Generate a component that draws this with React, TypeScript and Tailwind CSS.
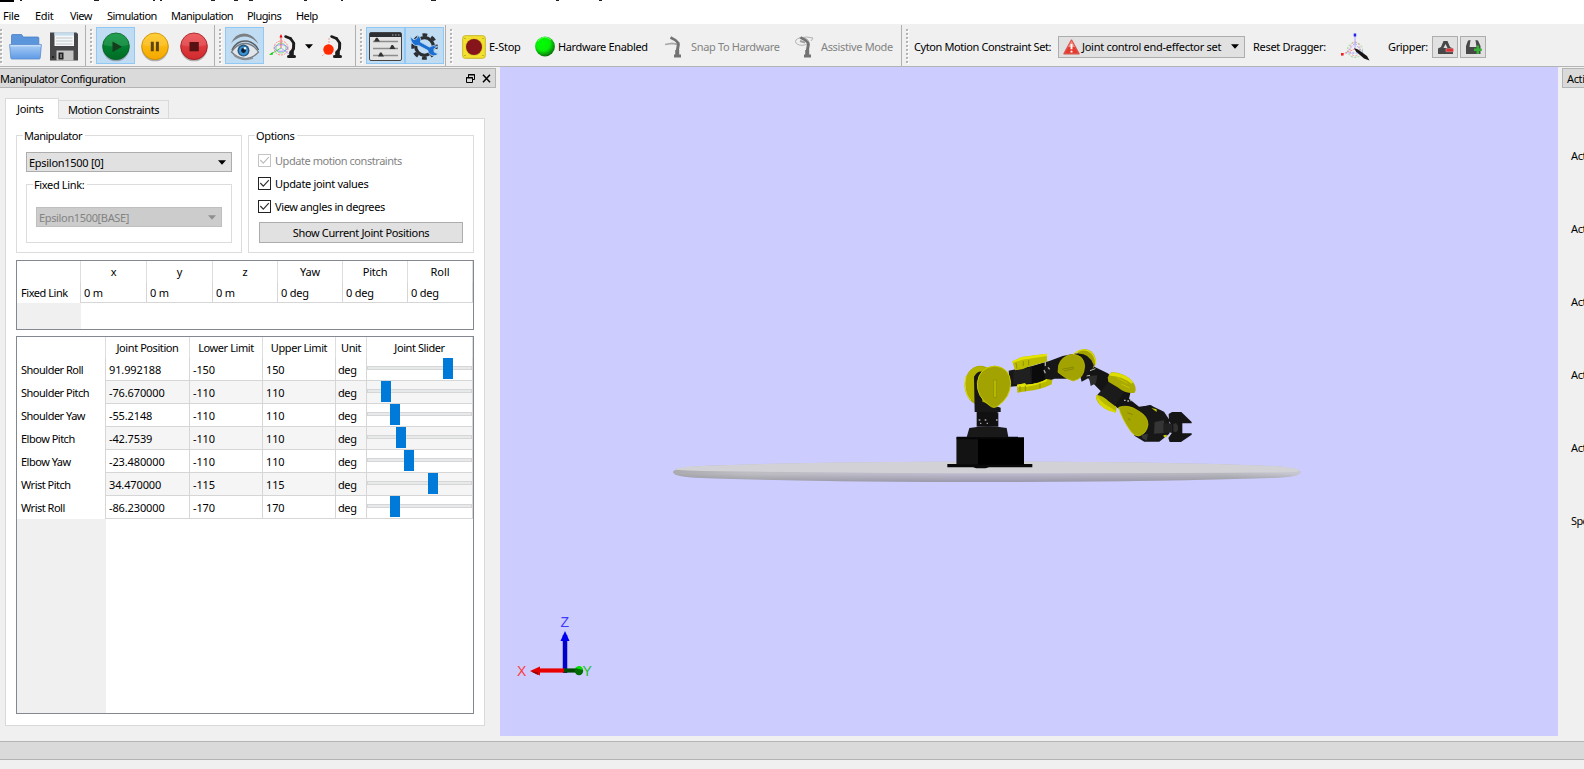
import type { ReactNode } from "react";

type Joint = { name: string; pos: string; lo: string; hi: string; knob: number };

const joints: Joint[] = [
  { name: "Shoulder Roll", pos: "91.992188", lo: "-150", hi: "150", knob: 76 },
  { name: "Shoulder Pitch", pos: "-76.670000", lo: "-110", hi: "110", knob: 14 },
  { name: "Shoulder Yaw", pos: "-55.2148", lo: "-110", hi: "110", knob: 23 },
  { name: "Elbow Pitch", pos: "-42.7539", lo: "-110", hi: "110", knob: 29 },
  { name: "Elbow Yaw", pos: "-23.480000", lo: "-110", hi: "110", knob: 37 },
  { name: "Wrist Pitch", pos: "34.470000", lo: "-115", hi: "115", knob: 61 },
  { name: "Wrist Roll", pos: "-86.230000", lo: "-170", hi: "170", knob: 23 },
];

/* Visible slivers of the clipped window caption: [left, width] */
const captionMarks: [number, number][] = [
  [20, 2], [94, 5], [153, 2], [160, 2], [211, 4], [234, 4], [249, 4], [304, 3], [341, 2], [431, 5], [556, 3], [599, 3],
];

function Grip() {
  return (
    <svg className="h-[36px] w-[3px] shrink-0" viewBox="0 0 3 36" shapeRendering="crispEdges">
      {[0, 4, 8, 12, 16, 20, 24, 28, 32].map((y) => (
        <g key={y}>
          <rect x="1" y={y + 1} width="2" height="2" fill="#fff" />
          <rect x="0" y={y} width="2" height="2" fill="#b4b4b4" />
        </g>
      ))}
    </svg>
  );
}

function Section({ className, children }: { className: string; children?: ReactNode }) {
  return <div className={`flex h-full shrink-0 items-center border-r border-[#b0b0b0] pt-[2px] ${className}`}>{children}</div>;
}

function ToolButton({ active, children }: { active?: boolean; children: ReactNode }) {
  return (
    <div
      className={`mb-[2px] flex h-[37px] w-[39px] shrink-0 items-center justify-center border pt-[2px] ${
        active ? "border-[#90c8f6] bg-[#c0dcf3]" : "border-transparent"
      }`}
    >
      {children}
    </div>
  );
}

function Folder() {
  return (
    <svg className="h-[27px] w-[33px] shrink-0" viewBox="0 0 33 27">
      <defs>
        <linearGradient id="fo" x1="0" y1="0" x2="0" y2="1">
          <stop offset="0" stopColor="#a9cdf5" />
          <stop offset="1" stopColor="#5f9be6" />
        </linearGradient>
      </defs>
      <path d="M2.500 12V2.500q0-1 1-1h8.500q1 0 1.400 1l.4 1.500h15q1 0 1 1V12z" fill="#5b95dc" stroke="#4a7fc4" strokeWidth=".8" />
      <path d="M.6 11.600h31.800l-1.200 13.400q-.1 1-1 1H2.800q-.9 0-1-1z" fill="url(#fo)" stroke="#5a8ccc" strokeWidth=".8" />
      <path d="M1.200 12.800h30.600" stroke="#d6e8fc" />
    </svg>
  );
}

function Floppy() {
  return (
    <svg className="h-[29px] w-[28px] shrink-0" viewBox="0 0 28 29">
      <path d="M0 .5h26.500L28 2v26.500H0z" fill="#47474a" />
      <path d="M4.500.5h19.500v13.500H4.500z" fill="#f4f6f8" />
      <path d="M4.500.5h19.500v3H4.500z" fill="#c5dcee" />
      <path d="M6 6h16.500M6 9h16.500M6 12h16.500" stroke="#c3c8cc" />
      <path d="M6.500 18.500h17v10h-17z" fill="#c4c4c4" />
      <path d="M8.500 20.500h5v7h-5z" fill="#222" />
      <path d="M10 22h2v4h-2z" fill="#777" />
      <path d="M2 24h2v2H2z" fill="#222" />
    </svg>
  );
}

function Round({ kind }: { kind: "play" | "pause" | "stop" }) {
  const c = { play: ["#00953a", "#0a6424", "#006b25"], pause: ["#ffc81e", "#c98f00", "#f5a800"], stop: ["#ee4b4f", "#a31c1f", "#cf2a2e"] }[kind];
  return (
    <svg className="h-[31px] w-[30px]" viewBox="0 0 30 31">
      <defs>
        <linearGradient id={kind} x1="0" y1="0" x2="0" y2="1">
          <stop offset="0" stopColor={c[0]} />
          <stop offset="1" stopColor={c[2]} />
        </linearGradient>
      </defs>
      <ellipse cx="15" cy="17" rx="13.500" ry="13.300" fill="#333" opacity=".35" />
      <circle cx="15" cy="15.300" r="13.300" fill={`url(#${kind})`} stroke={c[1]} strokeWidth=".9" />
      <path d="M2.500 14a12.500 11.800 0 0 1 25 0q-12 3-25 0z" fill="#fff" opacity=".12" />
      {kind === "play" && <path d="M11.500 10.500l9.500 5.200-9.500 5.300z" fill="#133d1d" />}
      {kind === "pause" && <path d="M10.800 10.800h3v9.500h-3zM15.900 10.800h3v9.500h-3z" fill="#5c4510" />}
      {kind === "stop" && <path d="M10.500 11h9.300v9.300h-9.300z" fill="#571113" />}
    </svg>
  );
}

function EyeIcon() {
  return (
    <svg className="h-[29px] w-[30px]" viewBox="0 0 30 29">
      <path d="M1 11.500Q5 1.500 14 1.500q9 0 14.500 10.500Q22 4.300 14 4.500 7 4.800 1 11.500z" fill="#7c7f83" />
      <path d="M2 18Q6.500 9 15 9q9 0 13.500 9" fill="none" stroke="#5b6066" strokeWidth="1.500" />
      <path d="M1.500 20Q7 11.500 15 11.500T28.500 20Q22 27 14.500 26.500 7 26 1.500 20z" fill="#e2e6ea" stroke="#777c82" strokeWidth="1.300" />
      <path d="M4 23q8 6.500 19 3" fill="none" stroke="#8b8f94" strokeWidth="1.800" />
      <circle cx="13.500" cy="18.500" r="6" fill="#25567f" />
      <circle cx="13.500" cy="18.800" r="4.600" fill="#3d90d2" />
      <circle cx="13.500" cy="18.500" r="2.400" fill="#0a1c2e" />
      <circle cx="15" cy="16.200" r="1.200" fill="#fff" />
    </svg>
  );
}

function MiniArm() {
  return (
    <g fill="none" stroke="#1d1d1d" strokeLinecap="round">
      <path d="M16.500 2.500l5 2" strokeWidth="2.600" />
      <path d="M21.500 4.500l3.200 4.500" strokeWidth="2.800" />
      <path d="M24.700 9.500l-.2 5-2 4" strokeWidth="3" />
      <path d="M22.500 18.500v3" strokeWidth="4.600" />
      <path d="M19.500 22.500h6" strokeWidth="3" />
    </g>
  );
}

function DraggerArm() {
  return (
    <svg className="h-[26px] w-[29px] shrink-0" viewBox="0 0 29 26">
      <g fill="none" strokeWidth=".8">
        <circle cx="12" cy="14" r="7" stroke="#ff7272" strokeDasharray="2 1" />
        <circle cx="12" cy="14" r="5" stroke="#6ed66e" />
        <ellipse cx="12" cy="14" rx="6.500" ry="3.300" stroke="#8585ff" />
        <path d="M12 14V2" stroke="#e44" />
        <path d="M12 14L2 20" stroke="#3c3" />
        <path d="M12 14l8 6" stroke="#99f" />
      </g>
      <path d="M10.500 3.500L12 0l1.500 3.500z" fill="#e00" />
      <path d="M0 21l3.500-3 .5 2.500z" fill="#0c0" />
      <MiniArm />
    </svg>
  );
}

function BallArm() {
  return (
    <svg className="h-[26px] w-[29px] shrink-0" viewBox="0 0 29 26">
      <path d="M6 22l6-5M12 17l6 5M13 4v8" stroke="#e88" strokeWidth=".8" strokeDasharray="2 1" />
      <g transform="translate(-1 0)"><MiniArm /></g>
      <circle cx="12.500" cy="15.500" r="5.200" fill="#ff2a00" />
    </svg>
  );
}

function PanelIcon() {
  return (
    <svg className="h-[29px] w-[33px]" viewBox="0 0 33 29">
      <rect x=".5" y=".5" width="32" height="28" rx="1.500" fill="#e4e4e4" stroke="#444" />
      <path d="M1 1h31v4H1z" fill="#2c2f33" />
      <path d="M23 3h1.500M26 3h1.500M29 3h1.500" stroke="#aaa" />
      <path d="M4 9.500h25M4 16.500h25M4 23.500h25" stroke="#8d8d8d" strokeWidth="1.500" />
      <path d="M5 9.500L7 5.800h1.500l2.500 3.700zM20.500 17l2-4h1.500l2.500 4zM9 24.500l2-4h1.500l2.500 4z" fill="#333" />
    </svg>
  );
}

function GearWrench() {
  return (
    <svg className="h-[29px] w-[33px]" viewBox="0 0 33 29">
      <circle cx="16.500" cy="14.500" r="8.800" fill="none" stroke="#2b2e32" strokeWidth="3.200" />
      <circle cx="16.500" cy="14.500" r="11.600" fill="none" stroke="#2b2e32" strokeWidth="3.200" strokeDasharray="4.800 4.311" strokeDashoffset="2.400" />
      <path
        d="M2 4.500l4 3.200 3.200-1.400.2-3q4.600 2.500 3 6.700l9.100 5q3.800-2.800 8-.4l-3.600 2.300.3 3.200 4.200 2q-5.600 3.800-9.600-.8-.9-1-.8-2.700l-9.600-5.200Q3.800 15.300 2 4.500z"
        fill="#1c6fd0"
        stroke="#c0dcf3"
        strokeWidth=".8"
      />
    </svg>
  );
}

function EStopIcon() {
  return (
    <svg className="h-6 w-6 shrink-0" viewBox="0 0 24 24">
      <rect x=".7" y=".7" width="22.600" height="22.600" rx="2.500" fill="#f3e02f" stroke="#c9b82a" />
      <circle cx="12" cy="12" r="8.700" fill="#d8c62b" />
      <circle cx="12" cy="12" r="8" fill="#85151a" />
      <path d="M2.500 3.500h1M20.500 3.500h1M2.500 20.500h1M20.500 20.500h1" stroke="#8f8428" />
    </svg>
  );
}

function Led() {
  return (
    <svg className="h-[21px] w-5 shrink-0" viewBox="0 0 20 21">
      <defs>
        <radialGradient id="led" cx=".4" cy=".36" r=".64">
          <stop offset="0" stopColor="#0f0" />
          <stop offset=".55" stopColor="#08ee08" />
          <stop offset="1" stopColor="#0a740a" />
        </radialGradient>
      </defs>
      <circle cx="10" cy="10.500" r="9.900" fill="url(#led)" />
      <path d="M3 5q6-7 13-1" stroke="#8dff8d" fill="none" opacity=".7" />
    </svg>
  );
}

function GreyArm({ assist }: { assist?: boolean }) {
  return (
    <svg className="h-[22px] w-[19px] shrink-0" viewBox="0 0 19 22">
      {assist ? (
        <g fill="none" stroke="#b2b2b2">
          <ellipse cx="7" cy="5.500" rx="6.500" ry="3.800" />
          <path d="M4 2q8-2 14 0l-2 3" />
          <path d="M5 5l5 1.500" strokeWidth="2" stroke="#a2a2a2" />
        </g>
      ) : (
        <path d="M0 8.500l7-1.200 6 1" fill="none" stroke="#a8a8a8" strokeWidth="1.700" />
      )}
      <g fill="none" stroke="#737373">
        <path d="M5.500 1.500l5 2.700 3.500 3.800" strokeWidth="2.600" />
        <path d="M13.500 7.500L12.300 15" strokeWidth="3" />
        <path d="M12.200 14v5" strokeWidth="4" />
        <path d="M9 20h7" strokeWidth="3" />
      </g>
    </svg>
  );
}

function Warning() {
  return (
    <svg className="h-[16px] w-[17px] shrink-0" viewBox="0 0 17 16">
      <path d="M8.500 1.200L16 14.800H1z" fill="#e63a2e" stroke="#d8544b" strokeWidth="1.500" strokeLinejoin="round" />
      <path d="M8.500 1.800L12 8 5 8z" fill="#f58b80" />
      <path d="M8.500 5v5.200M8.500 11.800v1.800" stroke="#fff" strokeWidth="1.900" />
    </svg>
  );
}

function ResetDragger() {
  return (
    <svg className="h-[28px] w-[30px] shrink-0" viewBox="0 0 30 28">
      <g fill="none" strokeWidth="1" strokeDasharray="2 1.500">
        <circle cx="14" cy="17" r="7.500" stroke="#8edb8e" />
        <ellipse cx="14" cy="16" rx="5" ry="7" stroke="#f59a9a" />
        <path d="M5 20l9-10 8 10z" stroke="#9b9bff" />
      </g>
      <path d="M14 15V3" stroke="#aaf" />
      <path d="M14 16L2 21" stroke="#f88" strokeDasharray="2 1" />
      <rect x="12.700" y=".5" width="2.500" height="3" fill="#22e" />
      <rect x="0" y="20" width="2.600" height="2.600" fill="#e22" />
      <path d="M13 15l4 1.500L26 23l2.500 4.500L23 25.500l-8-7z" fill="#151515" />
    </svg>
  );
}

function GripperIcon({ open }: { open?: boolean }) {
  return (
    <svg className="h-4 w-[17px]" viewBox="0 0 17 16">
      {open ? (
        <path d="M1 15V7l2-5.500L5.500 1l-1 7h7l-1-7L13 1.500 15.500 7v8z" fill="#484848" />
      ) : (
        <path d="M1 15V9.500L4 8l2.500-6h4L13 8l3 1.500V15zM8.500 5L6.500 9h4z" fill="#484848" fillRule="evenodd" />
      )}
      {open ? (
        <path d="M11.500 6.500h2.600v3h2.700V12h-2.700v3h-2.600v-3H9V9.500h2.500z" fill="#36b336" />
      ) : (
        <path d="M9 9.700h7.500v3H9z" fill="#e02b30" stroke="#f4b0b0" strokeWidth=".5" />
      )}
    </svg>
  );
}

function Caret({ dim }: { dim?: boolean }) {
  return (
    <svg className="h-[5px] w-2 shrink-0" viewBox="0 0 8 5">
      <path d="M0 .3h8L4 4.700z" fill={dim ? "#8f8f8f" : "#000"} />
    </svg>
  );
}

function Check({ label, dim, spacing }: { label: string; dim?: boolean; spacing: string }) {
  return (
    <div className={`flex h-[23px] items-center ${dim ? "text-[#838383]" : ""} ${spacing}`}>
      <svg className="mr-1 h-[13px] w-[13px]" viewBox="0 0 13 13">
        <rect x=".5" y=".5" width="12" height="12" fill="#fff" stroke={dim ? "#c4c4c4" : "#222"} />
        <path d="M2.300 6l3 3.200 5.500-6" fill="none" stroke={dim ? "#bdbdbd" : "#333"} strokeWidth="1.200" />
      </svg>
      {label}
    </div>
  );
}

function Legend({ children }: { children: ReactNode }) {
  return <span className="absolute -top-[8px] left-[6px] bg-white pl-px pr-[3px] leading-4">{children}</span>;
}

function Robot() {
  return (
    <svg className="absolute left-[430px] top-[273px] h-[140px] w-[280px]" viewBox="0 0 840 420">
      <path d="M52 372h255v10h-130l-10 3h-28l-10-3H52z" fill="#090909" />
      <path d="M80 292h202v82H80z" fill="#000" />
      <path d="M80 292h64v82H80z" fill="#131313" />
      <path d="M80 290h184v8H80z" fill="#050505" />
      <path d="M110 292l8-28q56-10 112 0l5 28z" fill="#191919" />
      <path d="M140 212h65v48h-65z" fill="#111" />
      <path d="M146 240h5M164 240h5M198 240h5M150 250h4M170 250h4M203 218h4" stroke="#aaa" strokeWidth="4" />
      <ellipse cx="151" cy="136" rx="47" ry="59" fill="#a8a800" />
      <path d="M108 110q12-30 44-31l28 10q-40 0-44 40v60q-34-30-28-79z" fill="#b4b400" />
      <path d="M108 108q-10 45 14 72" fill="none" stroke="#e0e000" strokeWidth="3" />
      <path d="M132 110q10-18 25-15v90l55 18v13h-78z" fill="#171717" />
      <path d="M236 92l70-14 50-14 42-16 30-6v74l-55 0-25 10-66 10-42 4z" fill="#171717" />
      <path d="M250 92l50-8 4 45-54 4z" fill="#202020" />
      <path d="M247 64l28-13 76-10v24l-30 8-28 8-14 6-24 4z" fill="#bcbc00" />
      <path d="M247 64l28-13 76-10v7l-74 11-30 10z" fill="#e4e400" />
      <path d="M258 68l3 18M280 64v14M296 60v16" stroke="#7c7c00" strokeWidth="2" />
      <path d="M306 80l36-12 2 54-38 6z" fill="#0b0b0b" />
      <path d="M346 64v14M342 90l4 10M354 82l5 6" stroke="#a9a9a9" strokeWidth="4" />
      <path d="M261 134l24-4 4 4q40-3 61-17l17 3-2 13q-30 16-77 21l-26 4z" fill="#b9b900" />
      <path d="M261 134l24-4 4 4q40-3 61-17v7q-30 13-60 16l-28 2z" fill="#e3e300" />
      <path d="M270 138v16M286 136v18M330 130v14" stroke="#7c7c00" strokeWidth="2" />
      <path d="M194 78q46 4 48 52-2 42-36 66-14 12-28 0-38-26-36-68 6-46 52-50z" fill="#a2a200" stroke="#cbcb00" strokeWidth="3" />
      <path d="M191 120h8v52h-8z" fill="#bcbc00" stroke="#808000" strokeWidth="1.500" />
      <ellipse cx="465" cy="64" rx="32" ry="36" fill="#a3a300" />
      <path d="M432 42q20-18 42-10 22 10 23 40" fill="none" stroke="#dada00" strokeWidth="4" />
      <path d="M433 41q45-6 58 34l-10 36-26 14z" fill="#161616" />
      <path d="M468 108l25-28 40 20 70 50-6 26 30 24 36-4 20 16-30 20-50-14-42-15z" fill="#141414" />
      <path d="M476 108l26-2-4 24-16 8zM500 140l38 34" fill="#2d2d2d" />
      <path d="M540 122l45 30-36 54-48-40z" fill="#1b1b1b" />
      <path d="M480 92l16-6M470 108l10-2" stroke="#bbb" strokeWidth="3" />
      <path d="M386 76q8-28 42-33 34 2 36 36-2 38-34 44-20-4-46-26z" fill="#a2a200" stroke="#c3c300" strokeWidth="2" />
      <path d="M396 88l36-7M402 93l30-7" stroke="#7a7a00" strokeWidth="2" />
      <path d="M533 112l12-16q44 4 64 30 14 20 4 33-28 2-48-16l-30-18z" fill="#aaaa00" />
      <path d="M535 106l12-9q44 5 62 30l-4 4q-28-22-64-24z" fill="#dede00" />
      <path d="M560 112l32 18M574 132l25 12" stroke="#c4c400" strokeWidth="3" />
      <path d="M500 164q18 2 36 20l24 18-2 15q-50-10-60-42z" fill="#b9b900" />
      <path d="M500 164q8 16 24 28l35 22-2 4q-46-10-57-42z" fill="#d6d600" />
      <path d="M582 181h5M592 183h5M601 182h4" stroke="#bbb" strokeWidth="4" />
      <path d="M620 205l40-10 42 20 16 24v42l-30 24h-45l-30-18z" fill="#171717" />
      <path d="M664 204l16 4v8zM700 286l10-2v8h-8z" fill="#c9c900" />
      <path d="M566 202q30-10 58 10 30 16 30 42-4 28-28 34-14 0-24-14-28-40-36-72z" fill="#a5a500" stroke="#cccc00" strokeWidth="2" />
      <path d="M592 218l16 6M594 236l8 4" stroke="#777700" strokeWidth="2" />
      <path d="M674 246l28-5 2 38-32 2zM634 284l20-2-4 20-14-8z" fill="#353535" />
      <path d="M700 250h50v28h-50z" fill="#202020" />
      <path d="M724 250h18v28h-18z" fill="#353535" />
      <path d="M716 222l10-6h28l31 30v4h-28v30h28v4l-32 22h-34l-4-12 10-14v-26l-8-10z" fill="#151515" />
      <path d="M730 252l8-3 6 8v14l-6 6-8-3z" fill="#313131" />
    </svg>
  );
}

function Platform() {
  return (
    <svg className="absolute left-[172px] top-[393px] h-[24px] w-[632px]" viewBox="0 0 632 24">
      <defs>
        <linearGradient id="rim" x1="0" y1="0" x2="1" y2="0">
          <stop offset="0" stopColor="#aaaab0" />
          <stop offset=".12" stopColor="#bdbdc2" />
          <stop offset=".5" stopColor="#bebad0" />
          <stop offset=".88" stopColor="#b7b7be" />
          <stop offset="1" stopColor="#c8c8d2" />
        </linearGradient>
        <linearGradient id="shade" x1="0" y1="0" x2="0" y2="1">
          <stop offset=".6" stopColor="#777786" stopOpacity="0" />
          <stop offset="1" stopColor="#777786" stopOpacity=".5" />
        </linearGradient>
      </defs>
      <path d="M1 12Q1 8 30 6 150 1.500 316 1.500T602 6Q629 8 629 12q0 5-29 6-120 4-284 4T30 18Q1 17 1 12z" fill="url(#rim)" />
      <path d="M1 12Q1 8 30 6 150 1.500 316 1.500T602 6Q629 8 629 12q0 5-29 6-120 4-284 4T30 18Q1 17 1 12z" fill="url(#shade)" />
      <path d="M3 9.500Q4 7 30 6 150 1.500 316 1.500T602 6Q626 7.500 628 11q-6 2-46 1.500-120 .7-266 .7T50 11.200Q6 10.800 3 9.500z" fill="#d2d2d6" />
    </svg>
  );
}

function Axes() {
  return (
    <svg className="absolute left-[16px] top-[545px] h-[70px] w-[80px]" viewBox="0 0 80 70" fontFamily="Liberation Sans, sans-serif" fontSize="14" letterSpacing="0">
      <path d="M49 23v38" stroke="#0000c8" strokeWidth="4.500" />
      <path d="M44.500 29L49 19l4.500 10z" fill="#0000f0" />
      <path d="M49 58.500H22" stroke="#e80000" strokeWidth="4.200" />
      <path d="M24 54.500v9L14 59z" fill="#e00000" />
      <path d="M22 60v3l-7-3.500z" fill="#900" />
      <path d="M48 58.500h14" stroke="#004b00" strokeWidth="4.200" />
      <circle cx="63" cy="59" r="4.200" fill="#006b00" />
      <path d="M59 56q6-5 8 2z" fill="#00e000" />
      <text x="44.500" y="15" fill="#3a3aff">Z</text>
      <text x="1" y="64" fill="#ff3b3b">X</text>
      <text x="66.500" y="64" fill="#21c021">Y</text>
    </svg>
  );
}

function Head({ w, children }: { w: string; children?: ReactNode }) {
  return <div className={`flex shrink-0 items-center justify-center border-r border-[#dedede] ${w}`}>{children}</div>;
}

function Cell({ w, children }: { w: string; children?: ReactNode }) {
  return <div className={`flex shrink-0 items-center border-r border-b border-[#d6d6d6] ${w}`}>{children}</div>;
}

export default function App() {
  return (
    <div className="flex h-[769px] w-[1584px] flex-col overflow-hidden bg-[#f0f0f0] font-['Noto_Sans','Liberation_Sans',sans-serif] text-[11px] leading-none tracking-[-0.35px] whitespace-nowrap text-black">
      <div className="relative h-[3px] shrink-0 bg-white">
        <div className="h-[2px] w-[14px] bg-black" />
        {captionMarks.map(([left, width]) => (
          <i key={left} className="absolute top-0 h-px bg-[#222]" style={{ left, width }} />
        ))}
      </div>
      <div className="flex h-[21px] shrink-0 items-center bg-white pl-[3px] pt-[4px] tracking-[-0.55px]">
        <span className="w-8 tracking-[-0.3px]">File</span>
        <span className="w-[35px] tracking-[-0.3px]">Edit</span>
        <span className="w-[37px]">View</span>
        <span className="w-16">Simulation</span>
        <span className="w-[76px]">Manipulation</span>
        <span className="w-[49px]">Plugins</span>
        <span>Help</span>
      </div>

      <div className="flex h-[43px] shrink-0 items-center border-b border-[#b4b4b4] border-t border-t-[#f0f0f0]">
        <Section className="w-[86px]">
          <Grip />
          <span className="w-[6px]" />
          <Folder />
          <span className="w-2" />
          <Floppy />
        </Section>
        <Section className="w-[129px] pl-1">
          <Grip />
          <span className="w-[3px]" />
          <ToolButton active><Round kind="play" /></ToolButton>
          <ToolButton><Round kind="pause" /></ToolButton>
          <ToolButton><Round kind="stop" /></ToolButton>
        </Section>
        <Section className="w-[141px] pl-1">
          <Grip />
          <span className="w-[3px]" />
          <ToolButton active><EyeIcon /></ToolButton>
          <span className="w-[5px]" />
          <DraggerArm />
          <span className="w-[7px]" />
          <Caret />
          <span className="w-[3px]" />
          <BallArm />
        </Section>
        <Section className="w-[90px] pl-1">
          <Grip />
          <span className="w-[3px]" />
          <ToolButton active><PanelIcon /></ToolButton>
          <ToolButton active><GearWrench /></ToolButton>
        </Section>
        <Section className="w-[456px] pl-1">
          <Grip />
          <span className="w-[9px]" />
          <EStopIcon />
          <span className="w-[46px] shrink-0 pl-[3px] tracking-[-0.25px]">E-Stop</span>
          <span className="w-[3px]" />
          <Led />
          <span className="w-[110px] shrink-0 pl-[3px]">Hardware Enabled</span>
          <GreyArm />
          <span className="w-[111px] shrink-0 pl-[7px] text-[#838383]">Snap To Hardware</span>
          <GreyArm assist />
          <span className="pl-[7px] text-[#838383]">Assistive Mode</span>
        </Section>
        <div className="flex h-full items-center pl-1 pt-[2px]">
          <Grip />
          <span className="w-[149px] shrink-0 pl-[5px] tracking-[-0.4px]">Cyton Motion Constraint Set:</span>
          <div className="flex h-[22px] w-[187px] shrink-0 items-center border border-[#adadad] bg-[#e1e1e1] pl-1">
            <Warning />
            <span className="w-[151px] shrink-0 pl-[2px] tracking-[-0.28px]">Joint control end-effector set</span>
            <Caret />
          </div>
          <span className="w-[96px] shrink-0 pl-2 tracking-[-0.3px]">Reset Dragger:</span>
          <ResetDragger />
          <span className="w-[61px] shrink-0 pl-[17px]">Gripper:</span>
          <div className="mr-[2px] flex h-[22px] w-[26px] items-center justify-center border border-[#adadad] bg-[#e1e1e1]"><GripperIcon /></div>
          <div className="flex h-[22px] w-[26px] items-center justify-center border border-[#adadad] bg-[#e1e1e1]"><GripperIcon open /></div>
        </div>
      </div>

      <div className="flex h-[669px] shrink-0">
        <div className="flex w-[500px] shrink-0 flex-col pt-px">
          <div className="flex h-[20px] w-[496px] shrink-0 items-center justify-between border border-l-0 border-[#b4b4b4] bg-[#dadada] pr-[4px]">
            <span className="tracking-[-0.5px]">Manipulator Configuration</span>
            <svg className="h-[9px] w-[25px]" viewBox="0 0 25 9" fill="none" stroke="#000">
              <path d="M2.500 3V.5h6v5H6.500" />
              <path d="M2 1h7" />
              <path d="M.5 3.500h6v5h-6zM0 4h7" />
              <path d="M17 .8l7 7.400M24 .8l-7 7.400" strokeWidth="1.500" />
            </svg>
          </div>
          <div className="mt-[10px] flex h-[20px] shrink-0 items-end pl-[5px]">
            <div className="relative z-10 -mb-px flex h-[21px] w-[54px] items-center border border-b-0 border-[#d9d9d9] bg-white pl-[11px] pb-[2px]">Joints</div>
            <div className="flex h-[18px] w-[110px] items-center border border-b-0 border-l-0 border-[#d9d9d9] pl-[9px] tracking-[-0.43px]">Motion Constraints</div>
          </div>
          <div className="ml-[5px] flex h-[608px] w-[480px] shrink-0 flex-col border border-[#d9d9d9] bg-white pl-[10px] pt-[16px]">
            <div className="flex h-[118px] shrink-0 gap-[6px]">
              <div className="relative w-[226px] border border-[#dcdcdc] px-[9px] pt-[16px]">
                <Legend><span className="tracking-[-0.5px]">Manipulator</span></Legend>
                <div className="flex h-[20px] items-center justify-between border border-[#adadad] bg-[#e1e1e1] pl-[2px] pr-[5px] pt-px">
                  <span className="tracking-[-0.28px]">Epsilon1500 [0]</span>
                  <Caret />
                </div>
                <div className="relative mt-[12px] h-[59px] border border-[#dcdcdc] px-[9px] pt-[22px]">
                  <Legend>Fixed Link:</Legend>
                  <div className="flex h-[20px] items-center justify-between border border-[#bfbfbf] bg-[#ccc] pl-[2px] pr-[5px] pt-px text-[#838383]">
                    <span>Epsilon1500[BASE]</span>
                    <Caret dim />
                  </div>
                </div>
              </div>
              <div className="relative w-[226px] border border-[#dcdcdc] pl-[9px] pt-[13px]">
                <Legend>Options</Legend>
                <Check label="Update motion constraints" dim spacing="tracking-[-0.45px]" />
                <Check label="Update joint values" spacing="tracking-[-0.33px]" />
                <Check label="View angles in degrees" spacing="tracking-[-0.37px]" />
                <div className="mt-[4px] ml-px flex h-[21px] w-[204px] items-center justify-center border border-[#adadad] bg-[#e1e1e1]">Show Current Joint Positions</div>
              </div>
            </div>

            <div className="mt-[7px] flex h-[70px] w-[458px] shrink-0 flex-col border border-[#828790]">
              <div className="flex h-[21px] shrink-0">
                <Head w="w-[64px]" />
                <Head w="w-[66px]">x</Head>
                <Head w="w-[66px]">y</Head>
                <Head w="w-[65px]">z</Head>
                <Head w="w-[65px] tracking-[-0.1px]">Yaw</Head>
                <Head w="w-[65px] tracking-[-0.2px]">Pitch</Head>
                <Head w="w-[65px] tracking-[-0.1px]">Roll</Head>
              </div>
              <div className="flex h-[21px] shrink-0 tracking-[-0.2px]">
                <div className="flex w-[64px] shrink-0 items-center border-r border-[#d6d6d6] pl-[4px] tracking-[-0.45px]">Fixed Link</div>
                <Cell w="w-[66px] pl-[3px]">0 m</Cell>
                <Cell w="w-[66px] pl-[3px]">0 m</Cell>
                <Cell w="w-[65px] pl-[3px]">0 m</Cell>
                <Cell w="w-[65px] pl-[3px]">0 deg</Cell>
                <Cell w="w-[65px] pl-[3px]">0 deg</Cell>
                <Cell w="w-[65px] pl-[3px]">0 deg</Cell>
              </div>
              <div className="w-[64px] grow bg-[#f0f0f0]" />
            </div>

            <div className="mt-[6px] flex h-[378px] w-[458px] shrink-0 flex-col border border-[#828790]">
              <div className="flex h-[21px] shrink-0 tracking-[-0.42px]">
                <Head w="w-[89px]" />
                <Head w="w-[84px]">Joint Position</Head>
                <Head w="w-[73px]">Lower Limit</Head>
                <Head w="w-[73px]">Upper Limit</Head>
                <Head w="w-[31px]">Unit</Head>
                <Head w="w-[106px]">Joint Slider</Head>
              </div>
              {joints.map((j, i) => (
                <div key={j.name} className="flex h-[23px] shrink-0">
                  <div className="flex w-[89px] shrink-0 items-center border-r border-[#d6d6d6] pl-[4px] tracking-[-0.5px]">{j.name}</div>
                  <div className={`flex tracking-[-0.12px] ${i % 2 ? "bg-[#f5f5f5]" : ""}`}>
                    <Cell w="w-[84px] pl-[3px]">{j.pos}</Cell>
                    <Cell w="w-[73px] pl-[3px]">{j.lo}</Cell>
                    <Cell w="w-[73px] pl-[3px]">{j.hi}</Cell>
                    <Cell w="w-[31px] pl-[2px] tracking-[-0.4px]">deg</Cell>
                    <Cell w="w-[106px] relative">
                      <div className="mb-[2px] h-[4px] w-[105px] border border-[#d6d6d6] bg-[#e7eaea]" />
                      <div className="absolute top-0 h-[21px] w-[10px] bg-[#007ad9]" style={{ left: j.knob }} />
                    </Cell>
                  </div>
                </div>
              ))}
              <div className="w-[89px] grow bg-[#f0f0f0]" />
            </div>
          </div>
        </div>

        <div className="relative w-[1058px] shrink-0 bg-[#ccccff]">
          <Platform />
          <Robot />
          <Axes />
        </div>

        <div className="flex w-[26px] shrink-0 flex-col overflow-hidden pl-1 pt-px">
          <div className="flex h-[20px] w-[120px] shrink-0 items-center border border-[#b4b4b4] bg-[#dadada] pl-[4px]">Acti</div>
          <div className="mt-[31px] flex flex-col pl-[9px]">
            <span className="flex h-[73px] items-center">Act</span>
            <span className="flex h-[73px] items-center">Act</span>
            <span className="flex h-[73px] items-center">Act</span>
            <span className="flex h-[73px] items-center">Act</span>
            <span className="flex h-[73px] items-center">Act</span>
            <span className="flex h-[73px] items-center tracking-[-0.6px]">Spe</span>
          </div>
        </div>
      </div>

      <div className="mt-[5px] h-[19px] shrink-0 border-y border-[#b4b4b4] bg-[#dadada]" />
    </div>
  );
}
